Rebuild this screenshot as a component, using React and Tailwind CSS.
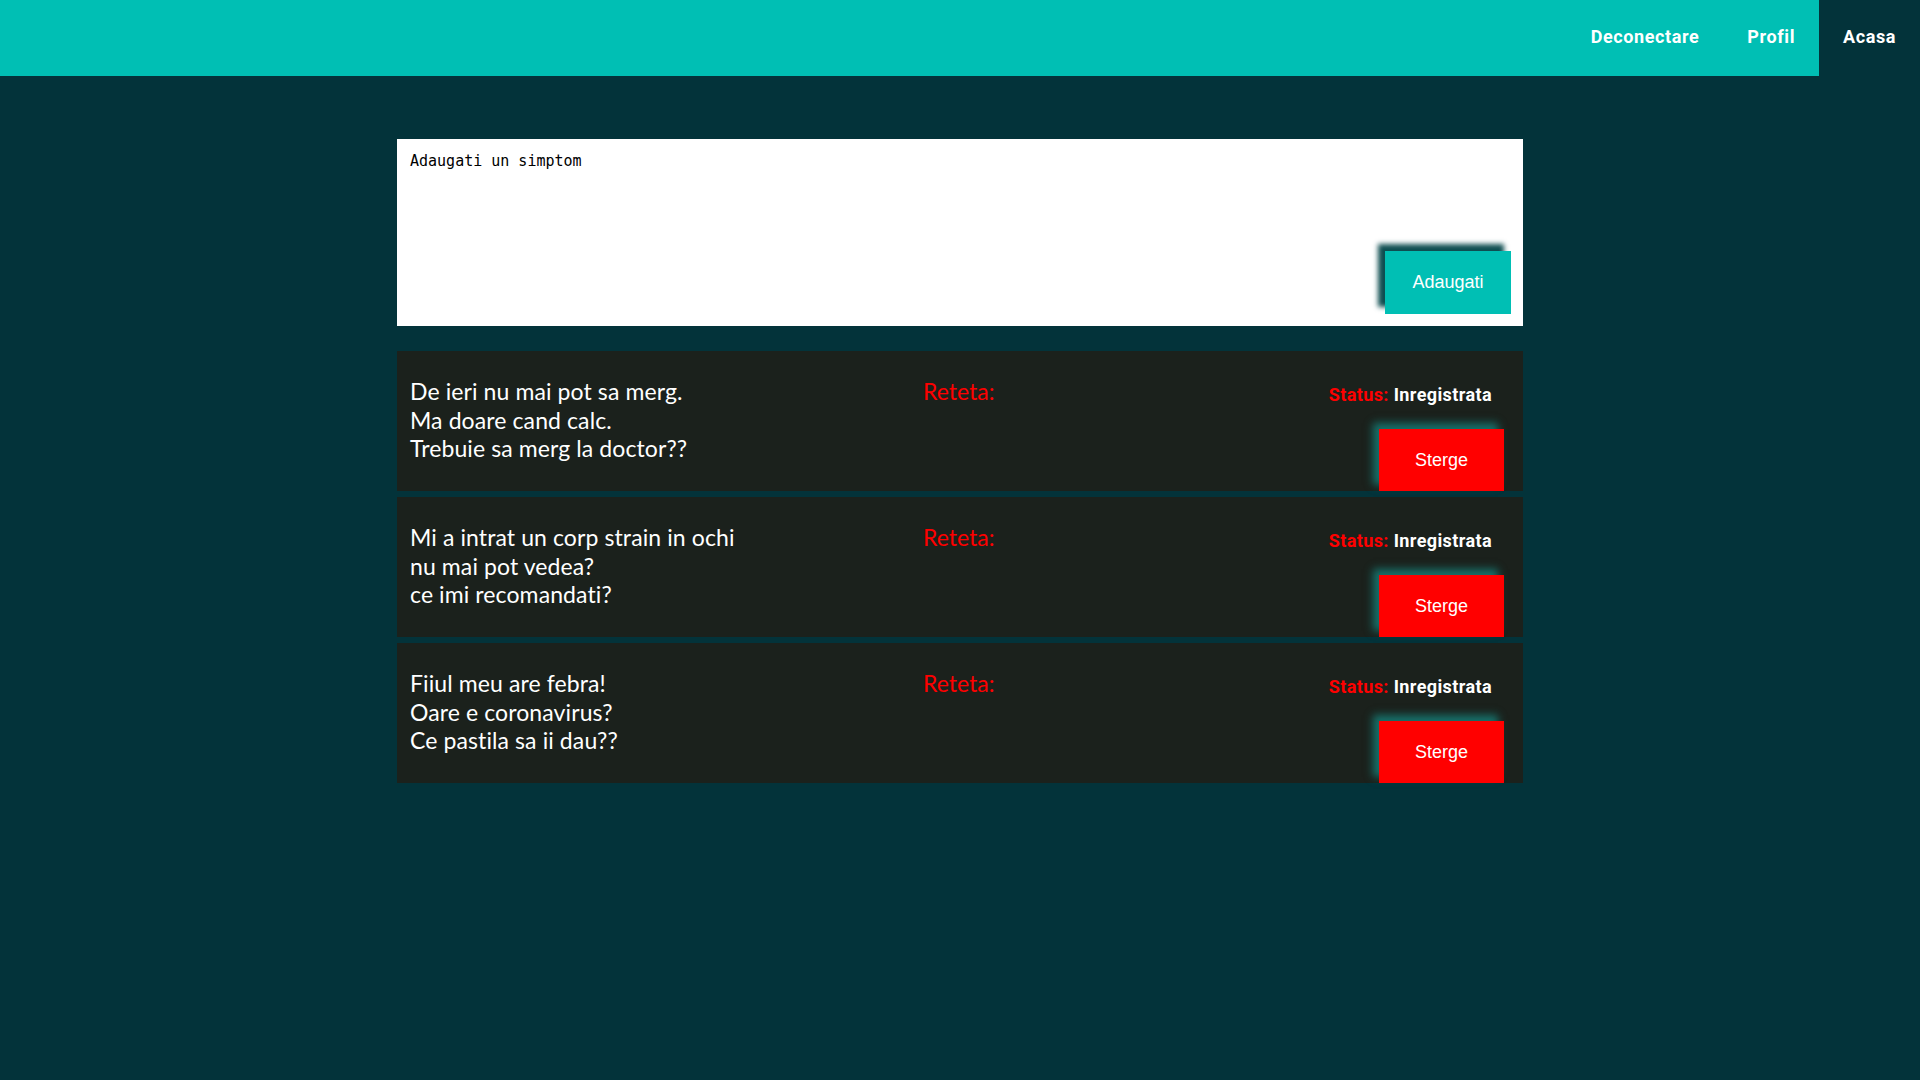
import { useState } from 'react'

const nav = [
  { id: 'logout', label: 'Deconectare' },
  { id: 'profile', label: 'Profil' },
  { id: 'home', label: 'Acasa' },
]

const symptoms = [
  { id: 1, lines: ['De ieri nu mai pot sa merg.', 'Ma doare cand calc.', 'Trebuie sa merg la doctor??'] },
  { id: 2, lines: ['Mi a intrat un corp strain in ochi', 'nu mai pot vedea?', 'ce imi recomandati?'] },
  { id: 3, lines: ['Fiiul meu are febra!', 'Oare e coronavirus?', 'Ce pastila sa ii dau??'] },
]

function Header({ current }) {
  return (
    <header className="h-[76px] bg-[#00bfb4] flex justify-end">
      {nav.map(({ id, label }) => (
        <a
          key={id}
          href="#"
          className={`h-full flex items-center px-[24px] pb-[3px] text-[18px] font-bold text-white tracking-[0.6px] font-['Roboto',sans-serif]
            ${current === id ? 'bg-[#03333a]' : ''}`}
        >
          {label}
        </a>
      ))}
    </header>
  )
}

function SymptomCard({ lines }) {
  return (
    <div className="h-[140px] bg-[#1b211c] flex pl-[13px] pr-[19px] font-['Lato',sans-serif]">
      <div className="w-[513px] pt-[26px] text-[23px] leading-[28.5px] tracking-[0.1px] text-white">
        {lines.map((l, i) => (
          <p key={i}>{l}</p>
        ))}
      </div>
      <div className="flex-1 pt-[26px] text-[23px] leading-[28.5px] text-[#ff0000]">Reteta:</div>
      <div className="flex flex-col items-end">
        <p className="mt-[34px] mr-[12px] text-[18px] leading-[20px] font-bold tracking-[0.4px] font-['Roboto',sans-serif]">
          <span className="text-[#ff0000]">Status: </span>
          <span className="text-white">Inregistrata</span>
        </p>
        <button className="mt-auto w-[125px] h-[62px] bg-[#ff0000] text-white text-[18px] font-['Liberation_Sans',Arial,sans-serif] shadow-[-6px_-6px_8px_#17716b]">
          Sterge
        </button>
      </div>
    </div>
  )
}

export default function App() {
  const [text, setText] = useState('')

  return (
    <div className="min-h-screen bg-[#03333a]">
      <Header current="home" />

      <main className="w-[1126px] ml-[397px] pt-[63px]">
        <div className="h-[187px] bg-white flex flex-col">
          <textarea
            value={text}
            onChange={(e) => setText(e.target.value)}
            placeholder="Adaugati un simptom"
            className="flex-1 resize-none outline-none px-[13px] pt-[12px] text-[15px] leading-[20px] text-black placeholder:text-black font-['DejaVu_Sans_Mono',monospace]"
          />
          <div className="flex justify-end pr-[12px] pb-[12px]">
            <button className="w-[126px] h-[63px] bg-[#00bfb4] text-white text-[18px] font-['Liberation_Sans',Arial,sans-serif] shadow-[-7px_-7px_5px_#0f4e51]">
              Adaugati
            </button>
          </div>
        </div>

        <div className="mt-[25px] flex flex-col gap-[6px]">
          {symptoms.map((s) => (
            <SymptomCard key={s.id} lines={s.lines} />
          ))}
        </div>
      </main>
    </div>
  )
}
